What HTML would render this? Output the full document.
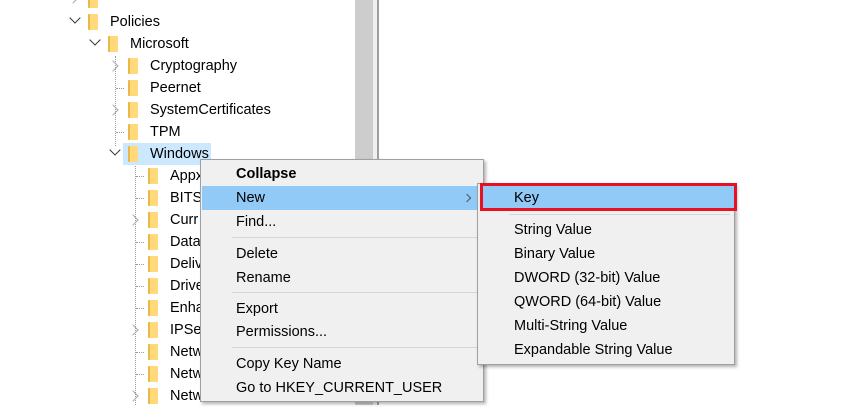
<!DOCTYPE html>
<html><head><style>
body{margin:0;width:856px;height:405px;overflow:hidden;background:#fff;font-family:"Liberation Sans",sans-serif;font-size:14.5px;color:#000;position:relative}
.a{position:absolute}
.t{position:absolute;line-height:22px;height:22px;white-space:nowrap}
.f{position:absolute;width:10px;height:16px;background:linear-gradient(90deg,#e8b84a 0,#e8b84a 2px,#ffd97a 2px);border-radius:1px}
.cv{position:absolute;width:7px;height:7px;border-right:1.5px solid #333;border-bottom:1.5px solid #333;transform:rotate(45deg)}
.cr{position:absolute;width:7px;height:7px;border-right:1.5px solid #a6a6a6;border-bottom:1.5px solid #a6a6a6;transform:rotate(-45deg)}
.vd{position:absolute;width:0;border-left:1px dotted #999}
.hd{position:absolute;height:0;border-top:1px dotted #999;width:8px}
.m{position:absolute;left:236px;line-height:22px;white-space:nowrap}
.sep{position:absolute;height:1px;background:#d5d5d5}
.s{position:absolute;left:514px;line-height:22px;white-space:nowrap}
</style></head><body>
<div class="a" style="left:355px;top:0;width:18px;height:405px;background:#cdcdcd"></div>
<div class="a" style="left:373px;top:0;width:4px;height:405px;background:#f0f0f0"></div>
<div class="a" style="left:377px;top:0;width:2px;height:405px;background:#a0a0a0"></div>

<div class="vd" style="left:115px;top:56px;height:90px"></div>
<div class="vd" style="left:135px;top:166px;height:239px"></div>
<div class="cr" style="left:69px;top:-6px"></div>
<div class="f" style="left:88px;top:-8px"></div>
<div class="cv" style="left:71px;top:14px"></div>
<div class="f" style="left:88px;top:14px"></div><div class="t" style="left:110px;top:11px">Policies</div>
<div class="cv" style="left:91px;top:36px"></div>
<div class="f" style="left:108px;top:36px"></div><div class="t" style="left:130px;top:33px">Microsoft</div>
<div class="cr" style="left:109px;top:62px"></div>
<div class="f" style="left:128px;top:58px"></div><div class="t" style="left:150px;top:55px">Cryptography</div>
<div class="hd" style="left:116px;top:88px"></div>
<div class="f" style="left:128px;top:80px"></div><div class="t" style="left:150px;top:77px">Peernet</div>
<div class="cr" style="left:109px;top:106px"></div>
<div class="f" style="left:128px;top:102px"></div><div class="t" style="left:150px;top:99px">SystemCertificates</div>
<div class="hd" style="left:116px;top:132px"></div>
<div class="f" style="left:128px;top:124px"></div><div class="t" style="left:150px;top:121px">TPM</div>
<div class="a" style="left:123px;top:143px;width:88px;height:22px;background:#cce8ff"></div>
<div class="cv" style="left:111px;top:146px"></div>
<div class="f" style="left:128px;top:146px"></div><div class="t" style="left:150px;top:143px">Windows</div>

<div class="hd" style="left:136px;top:176px"></div><div class="f" style="left:148px;top:168px"></div><div class="t" style="left:170px;top:165px">Appx</div>
<div class="hd" style="left:136px;top:198px"></div><div class="f" style="left:148px;top:190px"></div><div class="t" style="left:170px;top:187px">BITS</div>
<div class="cr" style="left:129px;top:216px"></div><div class="f" style="left:148px;top:212px"></div><div class="t" style="left:170px;top:209px">Curr</div>
<div class="hd" style="left:136px;top:242px"></div><div class="f" style="left:148px;top:234px"></div><div class="t" style="left:170px;top:231px">Data</div>
<div class="hd" style="left:136px;top:264px"></div><div class="f" style="left:148px;top:256px"></div><div class="t" style="left:170px;top:253px">Deliv</div>
<div class="hd" style="left:136px;top:286px"></div><div class="f" style="left:148px;top:278px"></div><div class="t" style="left:170px;top:275px">Drive</div>
<div class="hd" style="left:136px;top:308px"></div><div class="f" style="left:148px;top:300px"></div><div class="t" style="left:170px;top:297px">Enha</div>
<div class="cr" style="left:129px;top:326px"></div><div class="f" style="left:148px;top:322px"></div><div class="t" style="left:170px;top:319px">IPSe</div>
<div class="hd" style="left:136px;top:352px"></div><div class="f" style="left:148px;top:344px"></div><div class="t" style="left:170px;top:341px">Netw</div>
<div class="hd" style="left:136px;top:374px"></div><div class="f" style="left:148px;top:366px"></div><div class="t" style="left:170px;top:363px">Netw</div>
<div class="cr" style="left:129px;top:392px"></div><div class="f" style="left:148px;top:388px"></div><div class="t" style="left:170px;top:385px">Netw</div>

<div class="a" style="left:200px;top:159px;width:282px;height:241px;background:#f0f0f0;border:1px solid #a0a0a0;box-shadow:2px 2px 3px rgba(0,0,0,.3)"></div>
<div class="a" style="left:202px;top:186px;width:276px;height:24px;background:#91c9f7"></div>
<div class="m" style="top:163px;font-weight:bold">Collapse</div>
<div class="m" style="top:187px">New</div>
<div class="a" style="left:464px;top:195px;width:5px;height:5px;border-right:1px solid #555;border-top:1px solid #555;transform:rotate(45deg)"></div>
<div class="m" style="top:211px">Find...</div>
<div class="sep" style="left:232px;top:237px;width:246px"></div>
<div class="m" style="top:243px">Delete</div>
<div class="m" style="top:267px">Rename</div>
<div class="sep" style="left:232px;top:292px;width:246px"></div>
<div class="m" style="top:298px">Export</div>
<div class="m" style="top:321px">Permissions...</div>
<div class="sep" style="left:232px;top:347px;width:246px"></div>
<div class="m" style="top:353px">Copy Key Name</div>
<div class="m" style="top:377px">Go to HKEY_CURRENT_USER</div>

<div class="a" style="left:477px;top:183px;width:256px;height:180px;background:#f0f0f0;border:1px solid #a0a0a0;box-shadow:2px 2px 3px rgba(0,0,0,.3)"></div>
<div class="a" style="left:480px;top:183px;width:251px;height:22px;background:#91c9f7;border:3px solid #e81123"></div>
<div class="s" style="top:187px">Key</div>
<div class="sep" style="left:510px;top:214px;width:220px"></div>
<div class="s" style="top:219px">String Value</div>
<div class="s" style="top:243px">Binary Value</div>
<div class="s" style="top:267px">DWORD (32-bit) Value</div>
<div class="s" style="top:291px">QWORD (64-bit) Value</div>
<div class="s" style="top:315px">Multi-String Value</div>
<div class="s" style="top:339px">Expandable String Value</div>
</body></html>
